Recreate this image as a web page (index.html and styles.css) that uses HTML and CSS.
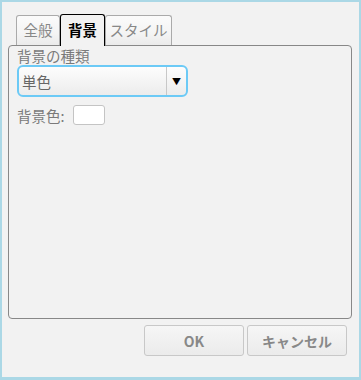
FILE: index.html
```html
<!DOCTYPE html>
<html lang="ja">
<head>
    <meta charset="UTF-8">
    <title>背景</title>
    <link rel="stylesheet" href="styles.css">
</head>
<body>
    <div class="window">
        <div class="tabs">
            <div class="tab tab-general">全般</div>
            <div class="tab tab-active">背景</div>
            <div class="tab tab-style">スタイル</div>
        </div>

        <div class="panel">
            <div class="label">背景の種類</div>
            <div class="select">
                <span class="select-value">単色</span>
                <span class="select-arrow">▼</span>
            </div>
            <div class="color-row">
                <span class="label">背景色:</span>
                <span class="swatch"></span>
            </div>
        </div>

        <div class="buttons">
            <button class="btn">OK</button>
            <button class="btn">キャンセル</button>
        </div>
    </div>
</body>
</html>
```

FILE: styles.css
```css
html, body {
    margin: 0;
    padding: 0;
}

body {
    font-family: "Noto Sans CJK JP", "Noto Sans", sans-serif;
    font-size: 14px;
    color: #777;
}

.window {
    box-sizing: border-box;
    width: 361px;
    height: 380px;
    border: 2px solid #abd8e6;
    border-bottom-width: 3px;
    background: #f2f2f2;
    display: flex;
    flex-direction: column;
    padding: 12px 7px 0 6px;
}

.tabs {
    display: flex;
    align-items: flex-end;
    padding-left: 8px;
    position: relative;
    z-index: 1;
    margin-bottom: -1px;
}

.tab {
    box-sizing: border-box;
    height: 30px;
    line-height: 28px;
    text-align: center;
    border: 1px solid #aaa;
    border-bottom: none;
    border-radius: 3px 3px 0 0;
    background: linear-gradient(to bottom, #fbfbfb, #f4f4f4 60%, #ebebeb);
    color: #888;
    font-size: 14.5px;
    margin-bottom: 1px;
}

.tab-general {
    width: 44px;
}

.tab-active {
    width: 45px;
    height: 32px;
    line-height: 30px;
    border-color: #000;
    background: #f2f2f2;
    color: #000;
    font-weight: bold;
    margin-bottom: 0;
}

.tab-style {
    width: 67px;
}

.panel {
    box-sizing: border-box;
    height: 274px;
    border: 1px solid #888;
    border-radius: 4px;
    padding: 2px 8px 0 8px;
}

.label {
    line-height: 16px;
    font-size: 14.5px;
    color: #7a7a7a;
}

.select {
    box-sizing: border-box;
    width: 171px;
    height: 32px;
    margin-top: 1px;
    border: 2px solid #6ccaf6;
    border-radius: 6px;
    background: linear-gradient(to bottom, #fdfdfd, #ececec);
    display: flex;
    align-items: center;
}

.select-value {
    flex: 1;
    padding-left: 3px;
    font-size: 14.5px;
    color: #666;
}

.select-arrow {
    width: 19px;
    height: 100%;
    border-left: 1px solid #c8c8c8;
    display: flex;
    align-items: center;
    justify-content: center;
    color: #000;
    font-size: 9px;
}

.color-row {
    display: flex;
    align-items: center;
    gap: 8px;
    margin-top: 8px;
}

.color-row .label {
    line-height: 19px;
}

.swatch {
    box-sizing: border-box;
    width: 32px;
    height: 20px;
    border: 1px solid #c4c4c4;
    border-radius: 3px;
    background: #fff;
}

.buttons {
    display: flex;
    justify-content: flex-end;
    gap: 3px;
    margin-top: 6px;
    padding-right: 5px;
}

.btn {
    box-sizing: border-box;
    width: 100px;
    height: 31px;
    border: 1px solid #c8c8c8;
    border-radius: 3px;
    background: linear-gradient(to bottom, #f6f6f6, #ebebeb);
    font-family: "Noto Sans CJK JP", "Noto Sans", sans-serif;
    font-size: 14px;
    font-weight: bold;
    color: #888;
    padding: 0;
}
```
